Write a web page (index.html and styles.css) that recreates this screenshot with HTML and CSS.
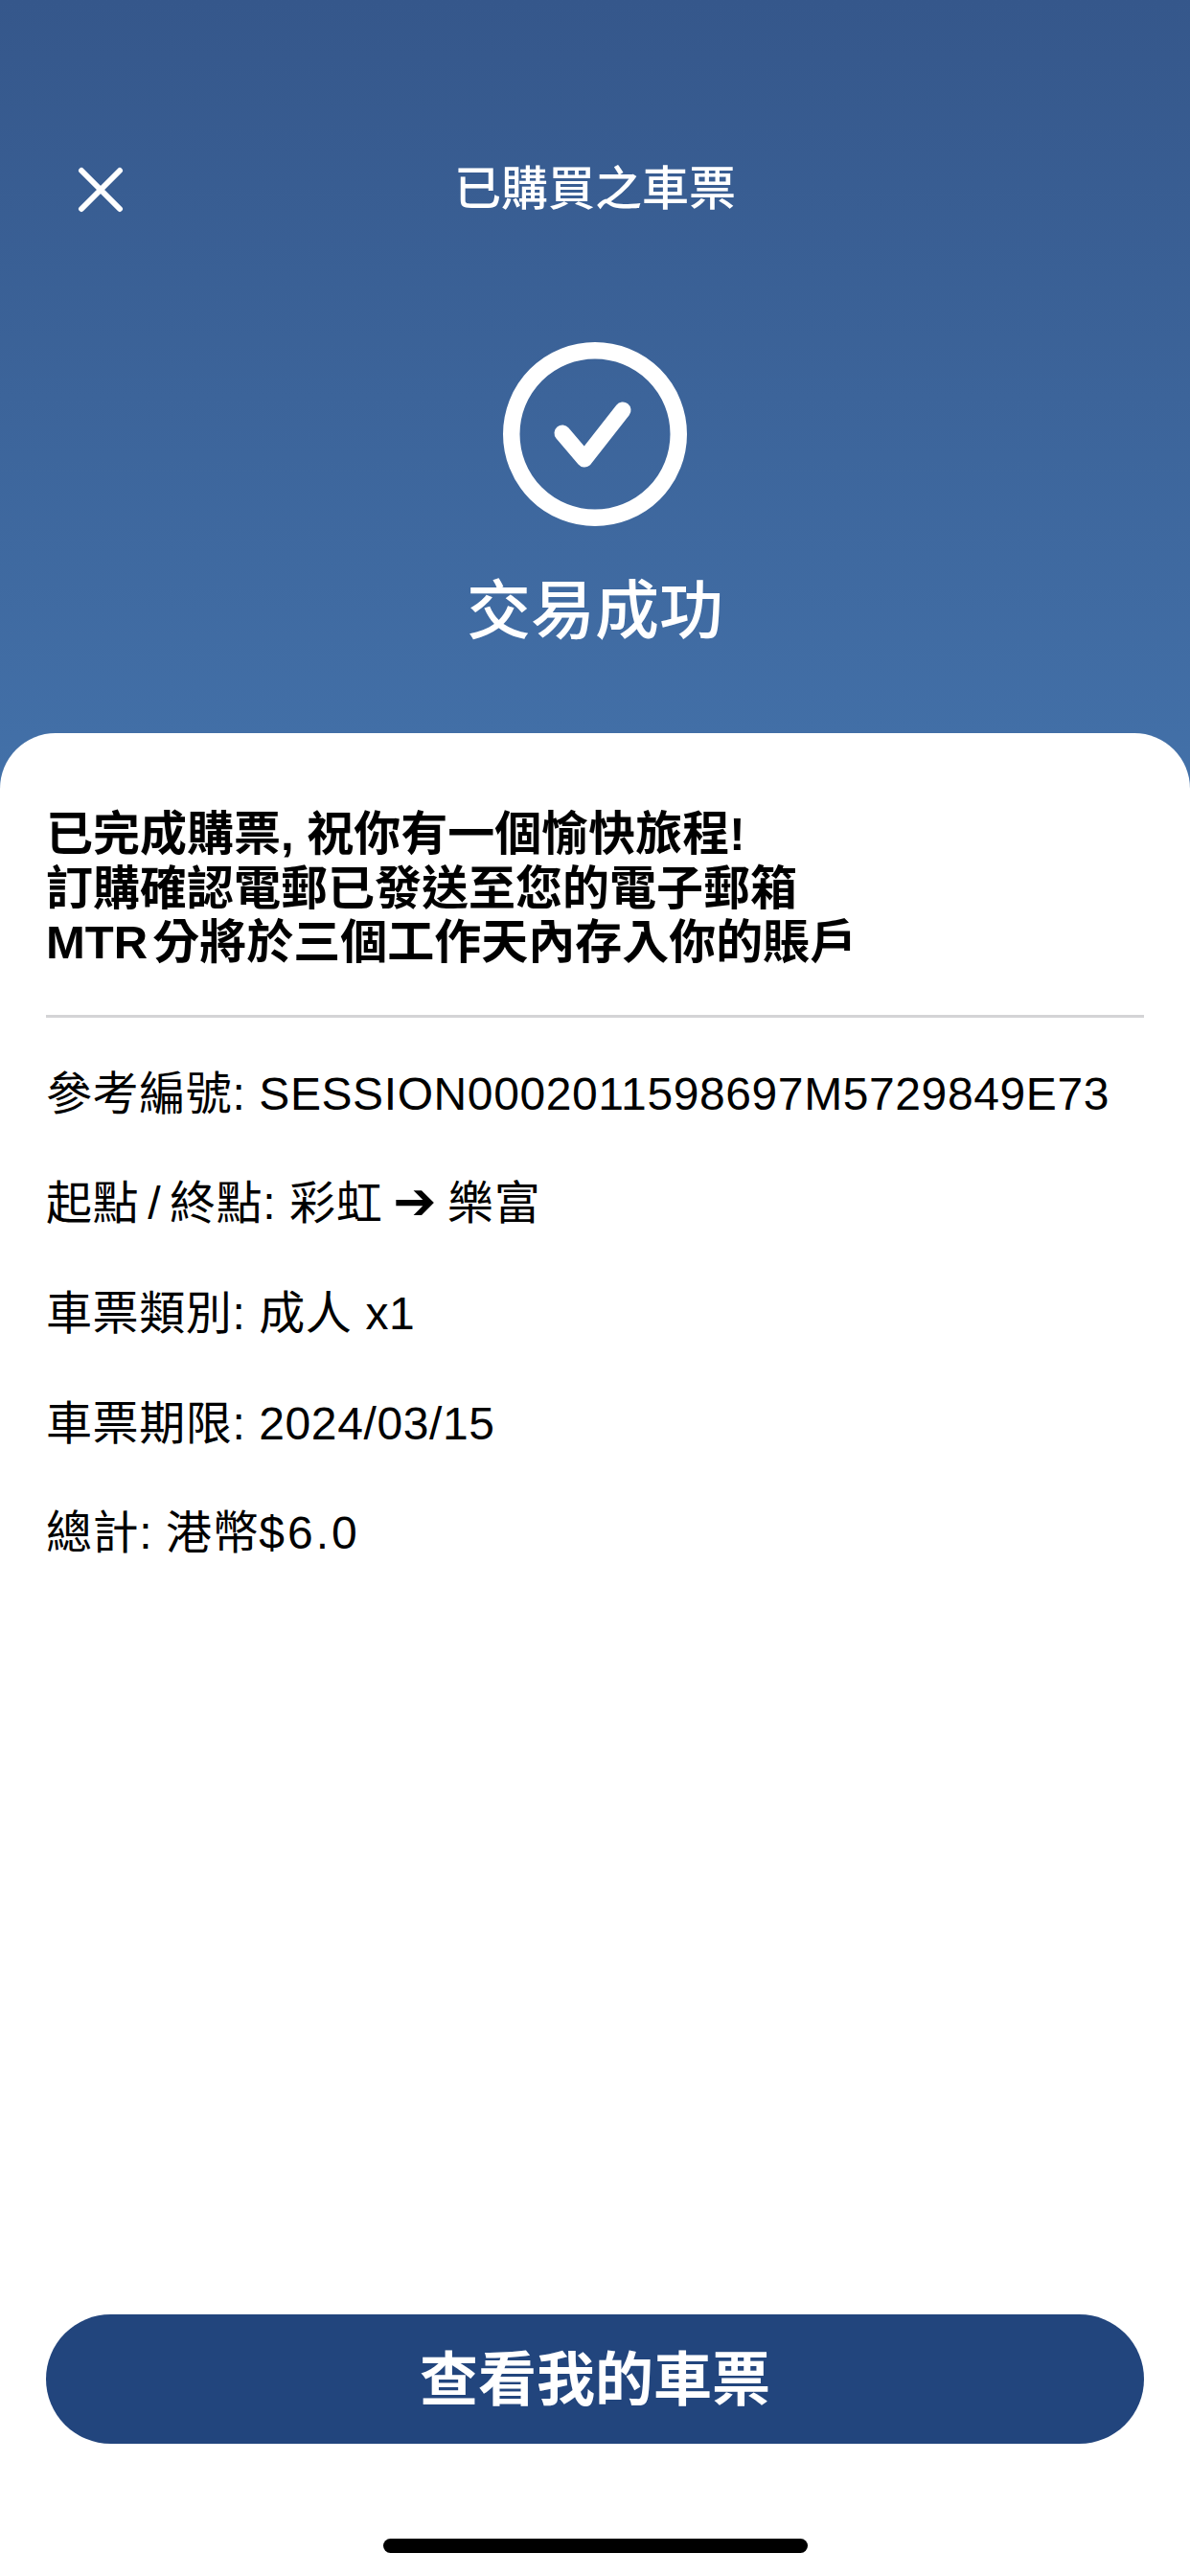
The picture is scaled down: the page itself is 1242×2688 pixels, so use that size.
FILE: index.html
```html
<!DOCTYPE html>
<html lang="zh-Hant">

<head>
  <meta charset="UTF-8">
  <meta name="viewport" content="width=device-width, initial-scale=1.0">
  <title>已購買之車票</title>
  <link rel="stylesheet" href="styles.css">
</head>

<body>
  <div class="page">
    <header class="hero">
      <div class="topBar">
        <svg class="closeIcon" viewBox="0 0 48 48" aria-hidden="true">
          <path d="M4 4L44 44M44 4L4 44" />
        </svg>
        <h1 class="topTitle">已購買之車票</h1>
      </div>
      <svg class="successIcon" viewBox="0 0 192 192" aria-hidden="true">
        <circle cx="96" cy="96" r="87.25" class="ring" />
        <path d="M62 95L85 122L125 71" class="tick" />
      </svg>
      <h2 class="successTitle">交易成功</h2>
    </header>

    <main class="sheet">
      <p class="message">已完成購票, 祝你有一個愉快旅程!<br>訂購確認電郵已發送至您的電子郵箱<br><span class="brand">MTR</span>分將於三個工作天內存入你的賬戶</p>
      <hr class="divider">
      <ul class="details">
        <li>參考編號: SESSION0002011598697M5729849E73</li>
        <li><span class="route">起點 / 終點</span>: 彩虹 <span class="arrow">➔</span> 樂富</li>
        <li>車票類別: 成人 x1</li>
        <li>車票期限: 2024/03/15</li>
        <li>總計: 港幣<span class="money">$6.0</span></li>
      </ul>
      <button class="ticketBtn">查看我的車票</button>
      <div class="homeBar"></div>
    </main>
  </div>
</body>

</html>
```

FILE: styles.css
```css
* {
  box-sizing: border-box;
}

body {
  margin: 0;
  font-family: "Liberation Sans", "Noto Sans CJK TC", sans-serif;
  color: #000;
}

.page {
  display: flex;
  flex-direction: column;
  width: 1242px;
  height: 2688px;
  background: linear-gradient(#35578b, #4371a9) 0 0 / 100% 830px no-repeat;
}

.hero {
  display: flex;
  flex-direction: column;
  align-items: center;
  height: 765px;
  padding-top: 166px;
  color: white;
}

.topBar {
  display: flex;
  justify-content: center;
  align-items: center;
  position: relative;
  width: 100%;
  height: 62px;
}

.closeIcon {
  position: absolute;
  left: 81px;
  top: 8px;
  width: 48px;
  height: 48px;
}

.closeIcon path {
  fill: none;
  stroke: white;
  stroke-width: 6;
  stroke-linecap: round;
}

.topTitle {
  margin: 0;
  font-size: 49px;
  font-weight: 500;
  line-height: 62px;
}

.successIcon {
  width: 192px;
  height: 192px;
  margin-top: 129px;
}

.ring {
  fill: none;
  stroke: white;
  stroke-width: 17.5;
}

.tick {
  fill: none;
  stroke: white;
  stroke-width: 17;
  stroke-linecap: round;
  stroke-linejoin: round;
}

.successTitle {
  margin: 46px 0 0;
  font-size: 67px;
  font-weight: 500;
  line-height: 86px;
}

.sheet {
  display: flex;
  flex-direction: column;
  flex: 1;
  padding: 77px 48px 0;
  background-color: white;
  border-radius: 58px 58px 0 0;
}

.message {
  margin: 0;
  font-size: 49px;
  font-weight: 700;
  line-height: 56.5px;
}

.brand {
  margin-right: 5px;
}

.divider {
  width: 100%;
  height: 3px;
  margin: 47px 0 0;
  border: none;
  background-color: #d4d4d6;
}

.details {
  margin: 52px 0 0;
  padding: 0;
  list-style: none;
  font-size: 48px;
  line-height: 56px;
  letter-spacing: 0.6px;
}

.details li {
  margin-bottom: 58.7px;
}

.route {
  word-spacing: -5px;
}

.arrow {
  margin: 0 -3px;
  font-family: "DejaVu Sans", sans-serif;
  font-weight: 700;
  font-size: 54px;
  line-height: 0;
}

.money {
  letter-spacing: 3px;
}

.ticketBtn {
  width: 100%;
  height: 135px;
  margin-top: auto;
  padding: 0 0 8px;
  border: none;
  border-radius: 68px;
  background-color: #22457d;
  color: white;
  font-family: inherit;
  font-size: 61px;
  font-weight: 700;
}

.homeBar {
  align-self: center;
  width: 443px;
  height: 15px;
  margin: 99px 0 24px;
  border-radius: 8px;
  background-color: #000;
}
```
